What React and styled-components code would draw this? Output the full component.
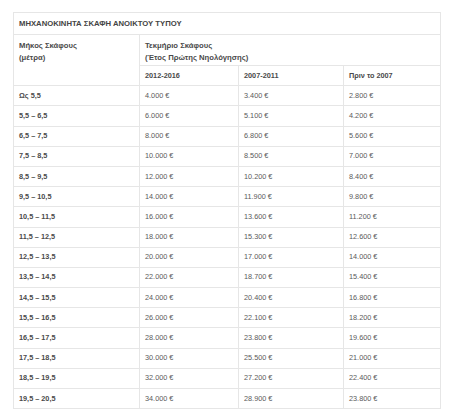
import React from 'react';
import styled, { createGlobalStyle } from 'styled-components';

const rows = [
    ['Ως 5,5', '4.000 €', '3.400 €', '2.800 €'],
    ['5,5 – 6,5', '6.000 €', '5.100 €', '4.200 €'],
    ['6,5 – 7,5', '8.000 €', '6.800 €', '5.600 €'],
    ['7,5 – 8,5', '10.000 €', '8.500 €', '7.000 €'],
    ['8,5 – 9,5', '12.000 €', '10.200 €', '8.400 €'],
    ['9,5 – 10,5', '14.000 €', '11.900 €', '9.800 €'],
    ['10,5 – 11,5', '16.000 €', '13.600 €', '11.200 €'],
    ['11,5 – 12,5', '18.000 €', '15.300 €', '12.600 €'],
    ['12,5 – 13,5', '20.000 €', '17.000 €', '14.000 €'],
    ['13,5 – 14,5', '22.000 €', '18.700 €', '15.400 €'],
    ['14,5 – 15,5', '24.000 €', '20.400 €', '16.800 €'],
    ['15,5 – 16,5', '26.000 €', '22.100 €', '18.200 €'],
    ['16,5 – 17,5', '28.000 €', '23.800 €', '19.600 €'],
    ['17,5 – 18,5', '30.000 €', '25.500 €', '21.000 €'],
    ['18,5 – 19,5', '32.000 €', '27.200 €', '22.400 €'],
    ['19,5 – 20,5', '34.000 €', '28.900 €', '23.800 €'],
];

export default function App() {
    return (
        <>
            <GlobalStyle />
            <Page>
                <Table>
                    <colgroup>
                        <col style={{ width: 126 }} />
                        <col style={{ width: 99 }} />
                        <col style={{ width: 105 }} />
                        <col style={{ width: 97 }} />
                    </colgroup>
                    <tbody>
                        <TitleRow>
                            <TitleCell colSpan={4}>ΜΗΧΑΝΟΚΙΝΗΤΑ ΣΚΑΦΗ ΑΝΟΙΚΤΟΥ ΤΥΠΟΥ</TitleCell>
                        </TitleRow>
                        <HeadRow>
                            <HeadCell rowSpan={2}>Μήκος Σκάφους<br />(μέτρα)</HeadCell>
                            <HeadCell colSpan={3}>Τεκμήριο Σκάφους<br />(Έτος Πρώτης Νηολόγησης)</HeadCell>
                        </HeadRow>
                        <Row>
                            <Cell bold>2012-2016</Cell>
                            <Cell bold>2007-2011</Cell>
                            <Cell bold>Πριν το 2007</Cell>
                        </Row>
                        {rows.map((r) => (
                            <Row key={r[0]}>
                                <Cell bold>{r[0]}</Cell>
                                <Cell>{r[1]}</Cell>
                                <Cell>{r[2]}</Cell>
                                <Cell>{r[3]}</Cell>
                            </Row>
                        ))}
                    </tbody>
                </Table>
            </Page>
        </>
    );
}

const GlobalStyle = createGlobalStyle`
    body{
        margin: 0;
        background: #fff;
        font-family: "Liberation Sans", Arial, sans-serif;
    }
`;

const Page = styled.div`
    padding: 12px 0 0 13px;
`;

const Table = styled.table`
    width: 427px;
    border-collapse: collapse;
    table-layout: fixed;
    font-size: 7.3px;
    color: #555;
`;

const Row = styled.tr`
    height: 20.2px;
`;

const TitleRow = styled.tr`
    height: 22px;
`;

const HeadRow = styled.tr`
    height: 31px;
`;

const Cell = styled.td`
    border: 1px solid #e6e6e6;
    padding: 0 5px;
    line-height: 12px;
    vertical-align: middle;
    white-space: nowrap;
    font-weight: ${(p) => (p.bold ? 700 : 400)};
    color: ${(p) => (p.bold ? '#4a4a4a' : '#5a5a5a')};
`;

const TitleCell = styled(Cell)`
    font-size: 7.7px;
    font-weight: 700;
    color: #444;
`;

const HeadCell = styled.td`
    border: 1px solid #e6e6e6;
    padding: 5px 5px 0;
    line-height: 12px;
    font-size: 7.7px;
    vertical-align: top;
    white-space: nowrap;
    font-weight: 700;
    color: #4a4a4a;
`;
